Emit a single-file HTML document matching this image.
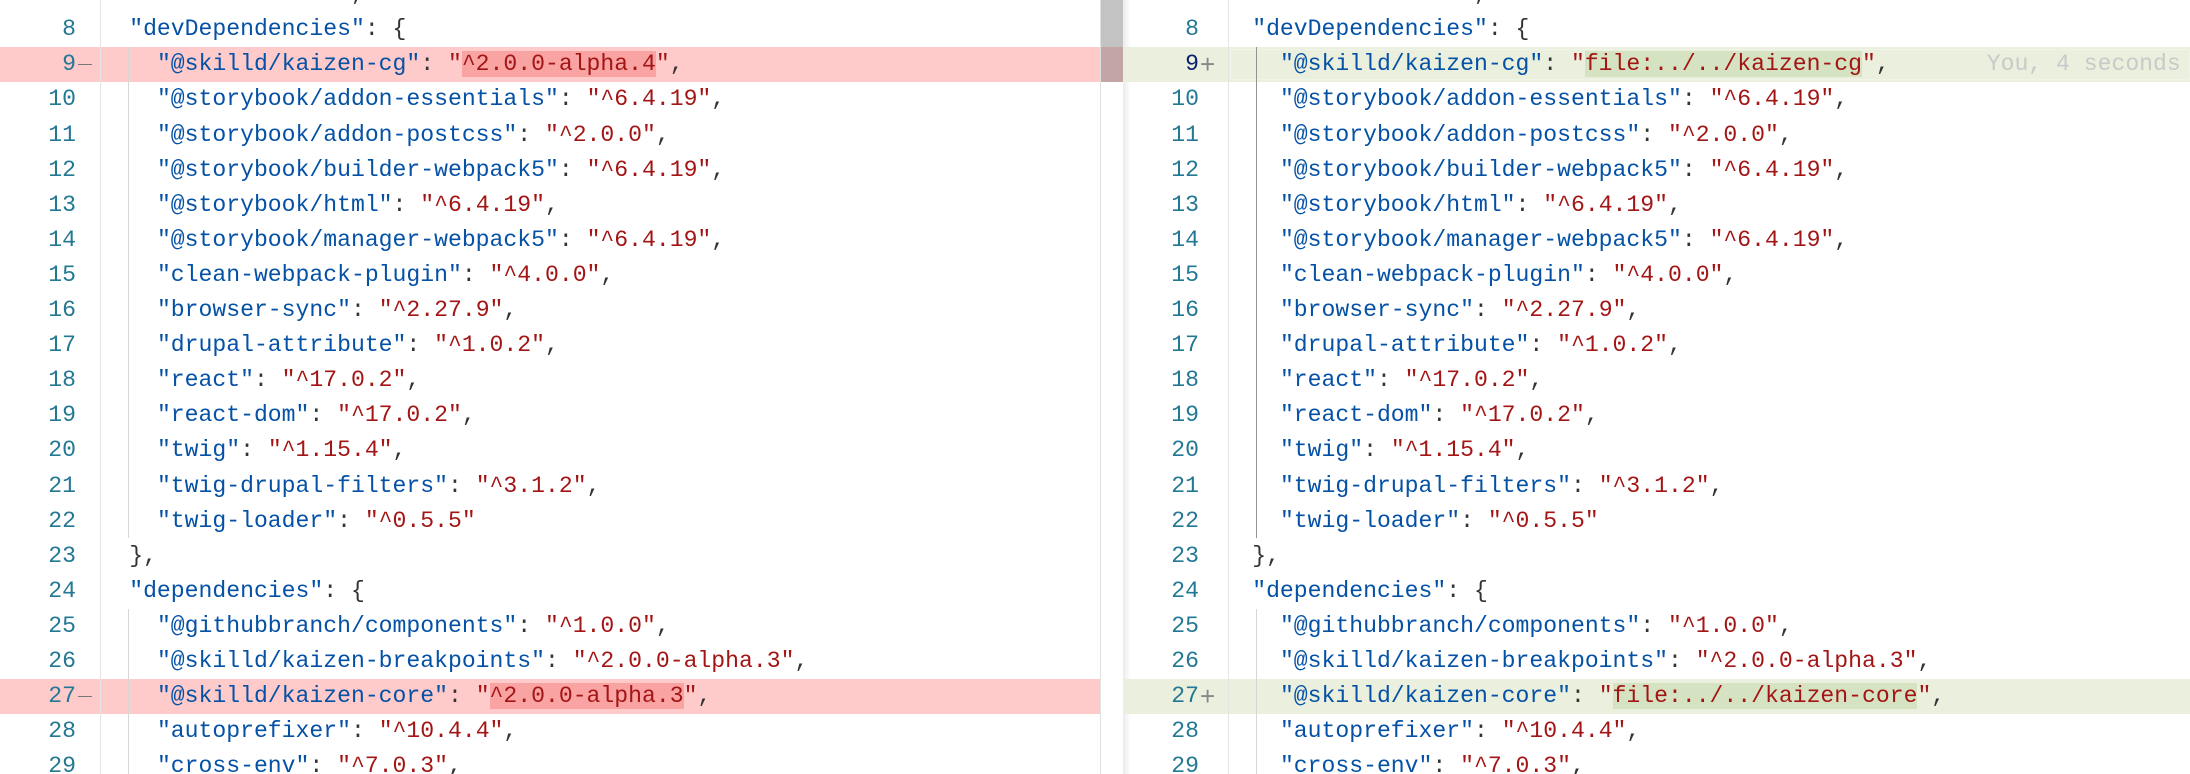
<!DOCTYPE html>
<html><head><meta charset="utf-8"><style>
html,body{margin:0;padding:0;width:2190px;height:774px;overflow:hidden;background:#fff;}
.pane{position:absolute;top:0;height:774px;overflow:hidden;}
.row{position:absolute;left:0;height:35.1px;line-height:35.1px;white-space:pre;font-family:"Liberation Mono",monospace;font-size:23.1px;}
.ln{position:absolute;width:76px;text-align:right;color:#237893;font-family:"Liberation Mono",monospace;font-size:23.1px;height:35.1px;line-height:35.1px;}
.code{position:absolute;left:101.5px;color:#333;}
.k{color:#0451a5}.s{color:#a31515}
.hr{background:#f9a3a3}.hg{background:#d6e3c2}
.mk{position:absolute;color:#888;font-family:"Liberation Sans",sans-serif;}
</style></head><body>

<div class="pane" style="left:0;width:1100px;">
 <div style="position:absolute;left:0;top:47.3px;width:1100px;height:35px;background:#ffcaca"></div>
 <div style="position:absolute;left:0;top:679px;width:1100px;height:35px;background:#ffcaca"></div>
 <div style="position:absolute;left:100px;top:0;width:1px;height:774px;background:#e4e4e4"></div>
 <div style="position:absolute;left:128px;top:47px;width:1px;height:491px;background:#d6d6d6"></div>
 <div style="position:absolute;left:128px;top:609px;width:1px;height:170px;background:#d6d6d6"></div>
 <div id="L"></div>
</div>
<div style="position:absolute;left:1100px;top:0;width:1px;height:774px;background:#e0e0e0"></div>
<div style="position:absolute;left:1101px;top:0;width:22px;height:47px;background:#c3c3c3"></div>
<div style="position:absolute;left:1101px;top:47px;width:22px;height:35px;background:#c4a5a6"></div>
<div class="pane" style="left:1123px;width:1067px;">
 <div style="position:absolute;left:0;top:0;width:8px;height:774px;background:linear-gradient(to right,rgba(0,0,0,.08),rgba(0,0,0,0))"></div>
 <div style="position:absolute;left:0;top:47.3px;width:1067px;height:35px;background:#eaf0dd"></div>
 <div style="position:absolute;left:107px;top:49px;width:960px;height:31px;border:1px solid #f0f4e8;box-sizing:border-box"></div>
 <div style="position:absolute;left:0;top:679px;width:1067px;height:35px;background:#eaf0dd"></div>
 <div style="position:absolute;left:105px;top:0;width:1px;height:774px;background:#e4e4e4"></div>
 <div style="position:absolute;left:133px;top:47px;width:1px;height:491px;background:#939393"></div>
 <div style="position:absolute;left:133px;top:609px;width:1px;height:170px;background:#d6d6d6"></div>
 <div id="R"></div>
</div>

<script>
var lines=[
[7,'  <k>"license"</k>: <s>"MIT"</s>,'],
[8,'  <k>"devDependencies"</k>: {'],
[9,null],
[10,'    <k>"@storybook/addon-essentials"</k>: <s>"^6.4.19"</s>,'],
[11,'    <k>"@storybook/addon-postcss"</k>: <s>"^2.0.0"</s>,'],
[12,'    <k>"@storybook/builder-webpack5"</k>: <s>"^6.4.19"</s>,'],
[13,'    <k>"@storybook/html"</k>: <s>"^6.4.19"</s>,'],
[14,'    <k>"@storybook/manager-webpack5"</k>: <s>"^6.4.19"</s>,'],
[15,'    <k>"clean-webpack-plugin"</k>: <s>"^4.0.0"</s>,'],
[16,'    <k>"browser-sync"</k>: <s>"^2.27.9"</s>,'],
[17,'    <k>"drupal-attribute"</k>: <s>"^1.0.2"</s>,'],
[18,'    <k>"react"</k>: <s>"^17.0.2"</s>,'],
[19,'    <k>"react-dom"</k>: <s>"^17.0.2"</s>,'],
[20,'    <k>"twig"</k>: <s>"^1.15.4"</s>,'],
[21,'    <k>"twig-drupal-filters"</k>: <s>"^3.1.2"</s>,'],
[22,'    <k>"twig-loader"</k>: <s>"^0.5.5"</s>'],
[23,'  },'],
[24,'  <k>"dependencies"</k>: {'],
[25,'    <k>"@githubbranch/components"</k>: <s>"^1.0.0"</s>,'],
[26,'    <k>"@skilld/kaizen-breakpoints"</k>: <s>"^2.0.0-alpha.3"</s>,'],
[27,null],
[28,'    <k>"autoprefixer"</k>: <s>"^10.4.4"</s>,'],
[29,'    <k>"cross-env"</k>: <s>"^7.0.3"</s>,']
];
function conv(t){return t.replace(/<k>/g,'<span class="k">').replace(/<\/k>/g,'</span>').replace(/<s>/g,'<span class="s">').replace(/<\/s>/g,'</span>');}
function build(id,side){
 var h='';
 lines.forEach(function(l){
  var n=l[0],top=47.3+(n-9)*35.1,t=l[1];
  if(t===null){
   if(n===9){t= side==='L' ? '    <span class="k">"@skilld/kaizen-cg"</span>: <span class="s">"<span class="hr">^2.0.0-alpha.4</span>"</span>,'
     : '    <span class="k">"@skilld/kaizen-cg"</span>: <span class="s">"<span class="hg">file:../../kaizen-cg</span>"</span>,<span style="color:#c9c9c9">       You, 4 seconds ago</span>';}
   else {t= side==='L' ? '    <span class="k">"@skilld/kaizen-core"</span>: <span class="s">"<span class="hr">^2.0.0-alpha.3</span>"</span>,'
     : '    <span class="k">"@skilld/kaizen-core"</span>: <span class="s">"<span class="hg">file:../../kaizen-core</span>"</span>,';}
  } else t=conv(t);
  var col=(side==='R'&&n===9)?'#0b216f':'#237893';
  h+='<div class="ln" style="left:0;top:'+top+'px;color:'+col+'">'+n+'</div>';
  if(n===9||n===27){
   if(side==='L') h+='<div style="position:absolute;left:78px;top:'+(top+17)+'px;width:14px;height:1px;background:#777"></div>';
   else h+='<div class="mk" style="left:77px;top:'+top+'px;height:35px;line-height:35px;font-size:26px;color:#888">+</div>';
  }
  h+='<div class="row code" style="top:'+top+'px">'+t+'</div>';
 });
 document.getElementById(id).innerHTML=h;
}
build('L','L');build('R','R');
</script>
</body></html>
